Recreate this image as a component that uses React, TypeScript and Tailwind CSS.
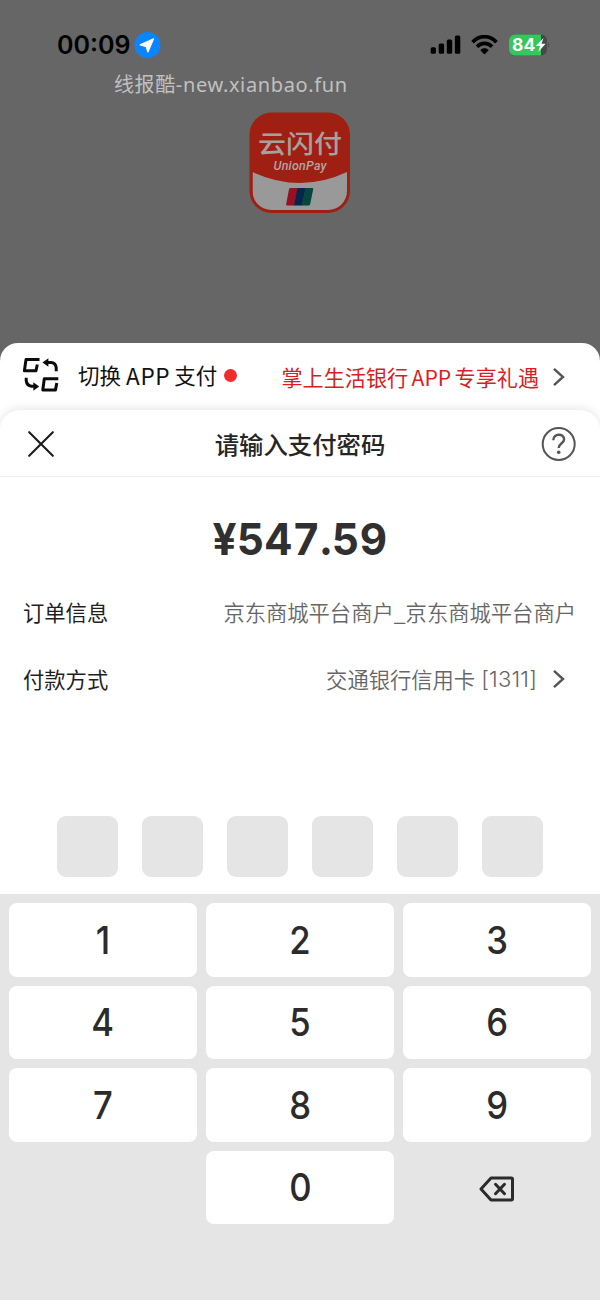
import React from 'react';

const cjk = "font-['Noto_Sans_CJK_SC',sans-serif]";

function StatusBar() {
  return (
    <div className="flex h-[70px] items-start justify-between pl-[57px] pr-[50px] pt-[31px]">
      <div className="flex h-7 items-center gap-1">
        <span className="w-[73px] whitespace-nowrap font-['Inter',sans-serif] text-[25px] font-semibold leading-7 text-black">00:09</span>
        <svg width="27" height="27" viewBox="0 0 27 27">
          <circle cx="13.5" cy="13" r="13" fill="#0a84ff" />
          <path d="M19.6 6.8 L13.9 20 L12.2 14.6 L6.2 12.9 Z" fill="#fff" stroke="#fff" strokeWidth="1.2" strokeLinejoin="round" />
        </svg>
      </div>
      <div className="flex h-7 items-center">
        <svg width="31" height="20" viewBox="0 0 31 20">
          <rect x="0.7" y="12.3" width="5.2" height="6.5" rx="1.5" />
          <rect x="8.7" y="8.6" width="5.4" height="10.2" rx="1.5" />
          <rect x="16.8" y="4.6" width="5.4" height="14.2" rx="1.5" />
          <rect x="24.9" y="0.6" width="5.4" height="18.2" rx="1.5" />
        </svg>
        <svg className="ml-[10px]" width="27" height="20" viewBox="0 0 27 20" fill="none" stroke="#000" strokeWidth="3.7">
          <path d="M1.6 7.2 C8 -0.2 19 -0.2 25.4 7.2" />
          <path d="M6 11.8 C10 7.3 17 7.3 21 11.8" />
          <path d="M9.3 15.2 C11.6 12.6 15.4 12.6 17.7 15.2 L13.5 19.6 Z" fill="#000" stroke="none" />
        </svg>
        <svg className="ml-[11px]" width="41" height="22" viewBox="0 0 41 22">
          <clipPath id="battery"><rect x="0" y="0.5" width="38" height="21" rx="6" /></clipPath>
          <g clipPath="url(#battery)">
            <rect width="38" height="22" fill="#484848" />
            <rect width="32" height="22" fill="#34c759" />
          </g>
          <path d="M39 8 Q41 11 39 14 Z" fill="#484848" />
          <text x="3" y="17.2" fill="#fff" fontSize="17.5" fontWeight="700" fontFamily="Inter, sans-serif">84</text>
          <path d="M34.5 4 L26.8 12 H31 L29.3 18 L36.6 9.8 H32.5 Z" fill="#fff" />
        </svg>
      </div>
    </div>
  );
}

function Logo() {
  return (
    <svg width="102" height="102" viewBox="0 0 102 102">
      <clipPath id="logo"><rect x="3.5" y="3.5" width="94.5" height="94.5" rx="19" /></clipPath>
      <rect x="0.5" y="0.5" width="100.5" height="100.5" rx="22" fill="#9f1f12" />
      <path d="M3.5 60 Q51 82 98 60 V102 H3.5 Z" fill="#999" clipPath="url(#logo)" />
      <text x="9" y="40.5" fontSize="25.5" fontWeight="500" textLength="84" lengthAdjust="spacingAndGlyphs" fill="#a8a09f" fontFamily="'Noto Sans CJK SC', sans-serif">云闪付</text>
      <text x="24.5" y="58" fontSize="12.5" fontWeight="500" fontStyle="italic" textLength="53" lengthAdjust="spacing" fill="#b3a5a3" fontFamily="Roboto, sans-serif">UnionPay</text>
      <g>
        <path d="M41.5 76 H49 L45 93.5 H38.3 Q36.8 93.5 37.2 92 L40 77.3 Q40.3 76 41.5 76 Z" fill="#9a1022" />
        <path d="M48.5 76 H57 L53 93.5 H44.8 Z" fill="#06264a" />
        <path d="M56.5 76 H63.2 Q64.5 76 64.2 77.3 L61.2 92 Q60.8 93.5 59.4 93.5 H52.8 Z" fill="#05473f" />
      </g>
    </svg>
  );
}

function Chevron() {
  return (
    <svg width="14" height="20" viewBox="0 0 14 20" fill="none" stroke="#555" strokeWidth="2.4">
      <path d="M2 1.8 L11 10 L2 18.2" />
    </svg>
  );
}

function SwitchRow() {
  return (
    <div className={`${cjk} flex h-[87px] items-start rounded-t-[18px] bg-white pl-[22px] pt-[13px]`}>
      <svg className="mt-[1px] shrink-0" width="38" height="36" viewBox="0 0 38 36" fill="none" stroke="#0c0c0c" strokeWidth="3" strokeLinejoin="round">
        <path d="M17.5 2.6 H4 L2.4 13.7 H14 L15.3 7.5" />
        <path d="M36.3 21.8 H22.3 L20.8 32.9 H33.5 L34.8 26" />
        <path d="M34.2 14.2 V10.5 Q33.6 5.8 29 5.5 H24.5" />
        <path d="M20.5 5.5 L26.4 1.2 V9.8 Z" fill="#0c0c0c" stroke="none" />
        <path d="M4.2 20.8 V23.5 Q4.8 28.6 9.5 29.3 H12.5" />
        <path d="M17.2 29.5 L11.3 25.2 V33.8 Z" fill="#0c0c0c" stroke="none" />
      </svg>
      <div className="ml-[18px] mt-[3px] flex h-8 items-center whitespace-nowrap pb-px text-[21.5px] leading-8 text-[#111]">
        <span>切换</span><span className="ml-[5px] mr-[4px] text-[22.5px] tracking-[0.7px]">APP</span><span>支付</span>
      </div>
      <span className="ml-[7px] mt-[13px] h-[13px] w-[13px] rounded-full bg-[#f02b2b]" />
      <div className="ml-auto mt-[5px] flex h-8 items-center gap-[3.5px] whitespace-nowrap text-[21.1px] leading-8 text-[#d81e23]">
        <span>掌上生活银行</span><span>APP</span><span>专享礼遇</span>
      </div>
      <div className="ml-[13px] mr-[34px] mt-[11px]"><Chevron /></div>
    </div>
  );
}

function SheetHeader() {
  return (
    <div className="flex h-[67px] items-center justify-between border-b border-[#eee] pl-[28px] pr-[23px] pt-[2px]">
      <svg width="26" height="26" viewBox="0 0 26 26" stroke="#1c1c1c" strokeWidth="2.1" strokeLinecap="round">
        <path d="M1.2 1.2 L24.8 24.8 M24.8 1.2 L1.2 24.8" />
      </svg>
      <h1 className={`${cjk} ml-[5px] text-[24.4px] font-medium leading-9 text-[#262626]`}>请输入支付密码</h1>
      <svg width="36" height="36" viewBox="0 0 36 36" fill="none" stroke="#555" strokeWidth="2">
        <circle cx="17.7" cy="18" r="16" />
        <path d="M12.3 14.2 C12.3 7 23.1 7 23.1 13.4 C23.1 17.3 17.7 17.2 17.7 22" strokeWidth="2.4" />
        <circle cx="17.7" cy="26.2" r="1.8" fill="#555" stroke="none" />
      </svg>
    </div>
  );
}

function Key({ label }: { label: string }) {
  return (
    <button className="flex h-[73.5px] items-center justify-center rounded-[8px] bg-white pt-[2px] font-['Inter',sans-serif] text-[38.5px] font-medium text-[#2b2b2b]">
      <span className="scale-x-90">{label}</span>
    </button>
  );
}

export default function App() {
  return (
    <div className="flex h-[1300px] w-[600px] flex-col overflow-hidden bg-[#666]">
      <div className="h-[343px] shrink-0">
        <StatusBar />
        <p className="h-[30px] whitespace-nowrap pl-[114px] font-['Noto_Sans','Noto_Sans_CJK_SC',sans-serif] text-[20px] leading-[30px] tracking-[0.62px] text-[#c0c0c0]">线报酷-new.xianbao.fun</p>
        <div className="mt-[12px] flex justify-center"><Logo /></div>
      </div>
      <SwitchRow />
      <section className="-mt-5 flex flex-1 flex-col rounded-t-[20px] bg-white shadow-[0_-2px_10px_rgba(0,0,0,0.09)]">
        <SheetHeader />
        <div className="mt-[34px] flex h-14 items-center justify-center font-['Inter',sans-serif] text-[44.5px] font-bold tabular-nums tracking-[0.4px] text-[#303030]">
          <span className="scale-x-[0.95]">¥547.59</span>
        </div>
        <div className={`${cjk} mt-[27px] flex h-9 items-center justify-between pl-[23px] pr-[24px] text-[21.3px]`}>
          <span className="text-[#1f1f1f]">订单信息</span>
          <span className="font-[350] text-[#666]">京东商城平台商户_京东商城平台商户</span>
        </div>
        <div className={`${cjk} mt-[31px] flex h-9 items-center pl-[23px] pr-[34px] text-[21.3px]`}>
          <span className="text-[#1f1f1f]">付款方式</span>
          <span className="ml-auto mr-[15px] flex gap-[6px] font-[350] text-[#666]">
            <span>交通银行信用卡</span>
            <span className="font-['Inter','Noto_Sans_CJK_SC',sans-serif] text-[22px] font-light leading-8 tracking-[0.2px]">[1311]</span>
          </span>
          <Chevron />
        </div>
        <div className="mt-[119px] flex justify-center gap-[24px]">
          {[0, 1, 2, 3, 4, 5].map((i) => <span key={i} className="h-[61px] w-[61px] rounded-[9px] bg-[#e5e5e5]" />)}
        </div>
        <div className="mt-[17px] flex-1 bg-[#e5e5e5] px-[9px] pt-[9px]">
          <div className="grid grid-cols-3 gap-[9px]">
            {['1', '2', '3', '4', '5', '6', '7', '8', '9'].map((n) => <Key key={n} label={n} />)}
            <span />
            <Key label="0" />
            <button className="flex items-center justify-center">
              <svg className="mt-[3px]" width="36" height="26" viewBox="0 0 36 26" fill="none" stroke="#2b2b2b" strokeWidth="3" strokeLinejoin="round" strokeLinecap="round">
                <path d="M12 2 H32.3 Q33.5 2 33.5 3.2 V22.8 Q33.5 24 32.3 24 H12 L2 13 Z" />
                <path d="M16.5 8.3 L25.5 17.7 M25.5 8.3 L16.5 17.7" />
              </svg>
            </button>
          </div>
        </div>
      </section>
    </div>
  );
}
